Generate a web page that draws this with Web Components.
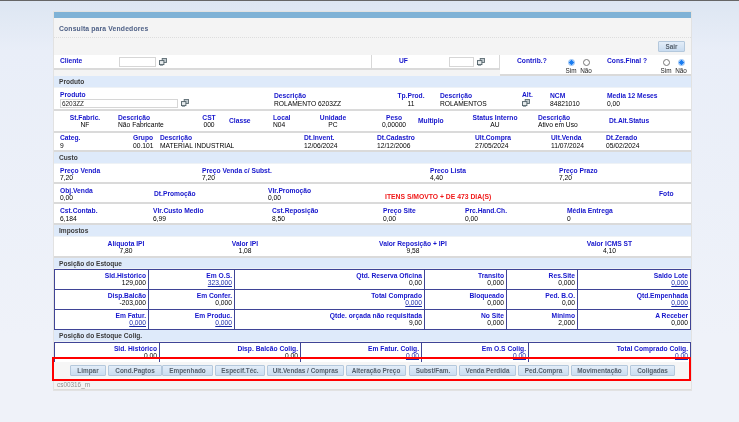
<!DOCTYPE html>
<html>
<head>
<meta charset="utf-8">
<title>Consulta para Vendedores</title>
<style>
html, body { margin: 0; height: 100%; }
body { background: #eef2fa; overflow: hidden; font-family: "Liberation Sans", Arial, sans-serif; }
</style>
</head>
<body>
<vendor-page></vendor-page>

<script>
const lookupIcon = `<svg width="8" height="8" viewBox="0 0 8 8"><rect x="3.2" y=".5" width="4.3" height="4" fill="#c3ccd0" stroke="#5d6c73" stroke-width=".9"/><rect x=".5" y="2.6" width="4.4" height="4" fill="#e6ebed" stroke="#4f5f66" stroke-width=".9"/><path d="M1 7.6h3" stroke="#7b8a90" stroke-width=".8"/></svg>`;

// bloco label + valor
class InfoField extends HTMLElement {
    constructor() {
        super();
        this.attachShadow({ mode: 'open' });
        const align = this.getAttribute('align') || 'left';
        this.shadowRoot.innerHTML = `
            <style>
                :host { display: block; text-align: ${align}; font-size: 6.7px; line-height: 7.4px; white-space: nowrap; }
                .l { color: #1414cc; font-weight: bold; }
                .v { color: #000; }
                .v.link { color: #1a2aa8; text-decoration: underline; }
            </style>
            <div class="l">${this.getAttribute('label') || ''}</div>
            <div class="v ${this.hasAttribute('link') ? 'link' : ''}">${this.getAttribute('value') || ''}<slot></slot></div>
        `;
    }
}
customElements.define('info-field', InfoField);

// linha com colunas definidas por grid
class InfoRow extends HTMLElement {
    constructor() {
        super();
        this.attachShadow({ mode: 'open' });
        this.shadowRoot.innerHTML = `
            <style>
                :host {
                    display: grid;
                    grid-template-columns: ${this.getAttribute('cols')};
                    height: ${this.getAttribute('h') || 20}px;
                    align-items: center;
                    background: #fff;
                    border-bottom: 2px solid #dadada;
                    box-sizing: border-box;
                    padding: ${this.getAttribute('pt') || 0}px 0 0 6px;
                }
            </style>
            <slot></slot>
        `;
    }
}
customElements.define('info-row', InfoRow);

class SectionHead extends HTMLElement {
    constructor() {
        super();
        this.attachShadow({ mode: 'open' });
        const h = Number(this.getAttribute('h') || 11);
        this.shadowRoot.innerHTML = `
            <style>
                :host {
                    display: block;
                    height: ${h}px;
                    line-height: ${h + 1}px;
                    padding-left: 5px;
                    background: #deeafa;
                    border-bottom: 1px solid #eef2f6;
                    color: #3c3c3c;
                    font-size: 6.6px;
                    font-weight: bold;
                }
            </style>
            <slot></slot>
        `;
    }
}
customElements.define('section-head', SectionHead);

// tabela de estoque com bordas azuis
class StockGrid extends HTMLElement {
    constructor() {
        super();
        this.attachShadow({ mode: 'open' });
        this.shadowRoot.innerHTML = `
            <style>
                :host {
                    display: grid;
                    grid-template-columns: ${this.getAttribute('cols')};
                    grid-auto-rows: ${this.getAttribute('rows') || '20px'};
                    background: #fff;
                    border: 1px solid #3f4496;
                    border-width: 1px 0 0 1px;
                    box-sizing: border-box;
                    height: ${this.getAttribute('h') || 'auto'};
                    overflow: hidden;
                }
                ::slotted(info-field) {
                    box-sizing: border-box;
                    border-right: 1px solid #3f4496;
                    border-bottom: 1px solid #3f4496;
                    padding: 2px 2px 0 0;
                }
            </style>
            <slot></slot>
        `;
    }
}
customElements.define('stock-grid', StockGrid);

class ActionButton extends HTMLElement {
    constructor() {
        super();
        this.attachShadow({ mode: 'open' });
        this.shadowRoot.innerHTML = `
            <style>
                :host {
                    display: block;
                    box-sizing: border-box;
                    width: ${this.getAttribute('w')}px;
                    height: 11px;
                    line-height: 9px;
                    text-align: center;
                    background: linear-gradient(#e3edf8, #c9dcf0);
                    border: 1px solid #b4c8dc;
                    border-radius: 1px;
                    color: #55606c;
                    font-size: 6.4px;
                    font-weight: bold;
                    white-space: nowrap;
                }
            </style>
            <slot></slot>
        `;
    }
}
customElements.define('action-button', ActionButton);

class RadioDot extends HTMLElement {
    constructor() {
        super();
        this.attachShadow({ mode: 'open' });
        const on = this.hasAttribute('on');
        this.shadowRoot.innerHTML = `
            <style>
                :host { display: flex; flex-direction: column; align-items: center; width: 15px; font-size: 6.4px; line-height: 6px; color: #222; gap: 2px; font-weight: normal; margin-top: 4px; }
                i { display: block; width: 5px; height: 5px; border-radius: 50%; border: 1px solid ${on ? '#8cbcf5' : '#777'}; background: ${on ? 'radial-gradient(#1a7cf0 60%, #cfe3fb 65%)' : '#fff'}; }
            </style>
            <i></i><span><slot></slot></span>
        `;
    }
}
customElements.define('radio-dot', RadioDot);

class VendorPage extends HTMLElement {
    constructor() {
        super();
        this.attachShadow({ mode: 'open' });
        this.shadowRoot.innerHTML = `
            <style>
                :host { display: block; position: relative; width: 739px; height: 422px; box-sizing: border-box; padding: 11px 0 0 54px; background: linear-gradient(#dde6f2, #e9eef8 12%, #eff2f9 80%); border-top: 1px solid #666; filter: blur(.3px); }
                .panel { width: 637px; background: #f4f4f4; box-shadow: 0 0 0 1px #e2e2e2; }
                .bar { height: 6px; background: #7fb2d6; }
                .title { height: 19px; line-height: 22px; padding-left: 5px; color: #4e6086; font-size: 6.8px; font-weight: bold; border-bottom: 1px dotted #ddd; letter-spacing: .15px; }
                .tools { height: 17px; display: flex; justify-content: flex-end; align-items: flex-start; padding: 3px 6px 0 0; box-sizing: border-box; }
                .client { display: grid; grid-template-columns: 318px 128px 1fr; height: 21px; align-items: start; }
                .c1, .c2 { box-sizing: border-box; height: 15px; background: #fff; border-bottom: 2px solid #dadada; border-right: 1px solid #d8d8d8; display: flex; align-items: center; font-size: 6.7px; font-weight: bold; color: #1414cc; }
                .c1 b { margin-left: 6px; width: 58.5px; align-self: flex-start; margin-top: 2px; line-height: 8px; }
                .c2 b { margin-left: 27px; width: 50px; align-self: flex-start; margin-top: 2px; line-height: 8px; }
                .box { box-sizing: border-box; width: 37px; height: 10px; background: #fff; border: 1px solid #d6d6d6; margin: 1px 3px 0 0; }
                .c2 .box { width: 25px; }
                .c3 { box-sizing: border-box; height: 21px; background: #fff; border-bottom: 2px solid #dadada; display: flex; font-size: 6.7px; font-weight: bold; color: #1414cc; }
                .c3 b { margin-top: 2px; line-height: 8px; }
                .prod-in { display: flex; align-items: center; margin-top: 0; }
                .prod-in span { box-sizing: border-box; display: block; width: 118px; height: 9px; line-height: 7px; background: #fff; border: 1px solid #d6d6d6; margin-right: 3px; padding-left: 1px; color: #222; font-size: 6.4px; }
                .actions { display: flex; gap: 2px; height: 18px; align-items: flex-start; padding: 3px 0 0 16px; box-sizing: border-box; background: #f6f6f6; }
                .foot { height: 10px; line-height: 10px; padding-left: 3px; font-size: 6.4px; color: #8f8f8f; box-sizing: border-box; border-bottom: 1px solid #ddd; }
                .mark { position: absolute; left: 52px; top: 356px; width: 635px; height: 20px; border: 2px solid #f00; pointer-events: none; }
                .red { color: #f01818; font-size: 6.8px; font-weight: bold; white-space: nowrap; align-self: end; padding-bottom: 1px; line-height: 8px; }
            </style>
            <div class="panel">
                <div class="bar"></div>
                <div class="title">Consulta para Vendedores</div>
                <div class="tools"><action-button w="27">Sair</action-button></div>
                <div class="client">
                    <div class="c1"><b>Cliente</b><span class="box"></span>${lookupIcon}</div>
                    <div class="c2"><b>UF</b><span class="box"></span>${lookupIcon}</div>
                    <div class="c3">
                        <b style="margin-left:17px;width:46.5px">Contrib.?</b>
                        <radio-dot on>Sim</radio-dot><radio-dot>Não</radio-dot>
                        <b style="margin-left:13.5px;width:51.5px">Cons.Final ?</b>
                        <radio-dot>Sim</radio-dot><radio-dot on>Não</radio-dot>
                    </div>
                </div>

                <section-head>Produto</section-head>
                <info-row h="23" pt="2" cols="214px 118px 38px 92px 28px 57px 1fr">
                    <info-field label="Produto"><div class="prod-in"><span>6203ZZ</span>${lookupIcon}</div></info-field>
                    <info-field label="Descrição" value="ROLAMENTO 6203ZZ"></info-field>
                    <info-field label="Tp.Prod." value="11" align="center"></info-field>
                    <info-field label="Descrição" value="ROLAMENTOS" style="padding-left:10px"></info-field>
                    <info-field label="Alt.">${lookupIcon}</info-field>
                    <info-field label="NCM" value="84821010"></info-field>
                    <info-field label="Media 12 Meses" value="0,00"></info-field>
                </info-row>
                <info-row h="22" cols="50px 84px 30px 49px 40px 40px 62px 40px 80px 74px 1fr">
                    <info-field label="St.Fabric." value="NF" align="center"></info-field>
                    <info-field label="Descrição" value="Não Fabricante" style="padding-left:8px"></info-field>
                    <info-field label="CST" value="000" align="center"></info-field>
                    <info-field label="Classe" style="padding-left:5px"></info-field>
                    <info-field label="Local" value="N04"></info-field>
                    <info-field label="Unidade" value="PC" align="center"></info-field>
                    <info-field label="Peso" value="0,00000" align="center" style="margin-left:20px"></info-field>
                    <info-field label="Multiplo" style="padding-left:3px"></info-field>
                    <info-field label="Status Interno" value="AU" align="center"></info-field>
                    <info-field label="Descrição" value="Ativo em Uso" style="padding-left:3px"></info-field>
                    <info-field label="Dt.Alt.Status"></info-field>
                </info-row>
                <info-row h="19" cols="73px 27px 144px 73px 98px 76px 55px 1fr">
                    <info-field label="Categ." value="9"></info-field>
                    <info-field label="Grupo" value="00.101"></info-field>
                    <info-field label="Descrição" value="MATERIAL INDUSTRIAL"></info-field>
                    <info-field label="Dt.Invent." value="12/06/2024"></info-field>
                    <info-field label="Dt.Cadastro" value="12/12/2006"></info-field>
                    <info-field label="Ult.Compra" value="27/05/2024"></info-field>
                    <info-field label="Ult.Venda" value="11/07/2024"></info-field>
                    <info-field label="Dt.Zerado" value="05/02/2024"></info-field>
                </info-row>

                <section-head>Custo</section-head>
                <info-row h="20" pt="2" cols="142px 228px 129px 1fr">
                    <info-field label="Preço Venda" value="7,20"></info-field>
                    <info-field label="Preço Venda c/ Subst." value="7,20"></info-field>
                    <info-field label="Preco Lista" value="4,40"></info-field>
                    <info-field label="Preço Prazo" value="7,20"></info-field>
                </info-row>
                <info-row h="20" pt="2" cols="94px 114px 117px 274px 1fr">
                    <info-field label="Obj.Venda" value="0,00"></info-field>
                    <info-field label="Dt.Promoção"></info-field>
                    <info-field label="Vlr.Promoção" value="0,00"></info-field>
                    <div class="red">ITENS S/MOVTO + DE 473 DIA(S)</div>
                    <info-field label="Foto"></info-field>
                </info-row>
                <info-row h="21" pt="2" cols="93px 119px 111px 82px 102px 1fr">
                    <info-field label="Cst.Contab." value="6,184"></info-field>
                    <info-field label="Vlr.Custo Medio" value="6,99"></info-field>
                    <info-field label="Cst.Reposição" value="8,50"></info-field>
                    <info-field label="Preço Site" value="0,00"></info-field>
                    <info-field label="Prc.Hand.Ch." value="0,00"></info-field>
                    <info-field label="Média Entrega" value="0"></info-field>
                </info-row>

                <section-head>Impostos</section-head>
                <info-row h="21" pt="1" cols="132px 106px 230px 1fr">
                    <info-field label="Alíquota IPI" value="7,80" align="center"></info-field>
                    <info-field label="Valor IPI" value="1,08" align="center"></info-field>
                    <info-field label="Valor Reposição + IPI" value="9,58" align="center"></info-field>
                    <info-field label="Valor ICMS ST" value="4,10" align="center"></info-field>
                </info-row>

                <section-head h="10">Posição do Estoque</section-head>
                <stock-grid cols="94px 86px 190px 82px 71px 113px">
                    <info-field align="right" label="Sld.Histórico" value="129,000"></info-field>
                    <info-field align="right" label="Em O.S." value="323,000" link></info-field>
                    <info-field align="right" label="Qtd. Reserva Oficina" value="0,00"></info-field>
                    <info-field align="right" label="Transito" value="0,000"></info-field>
                    <info-field align="right" label="Res.Site" value="0,000"></info-field>
                    <info-field align="right" label="Saldo Lote" value="0,000" link></info-field>
                    <info-field align="right" label="Disp.Balcão" value="-203,000"></info-field>
                    <info-field align="right" label="Em Confer." value="0,000"></info-field>
                    <info-field align="right" label="Total Comprado" value="0,000" link></info-field>
                    <info-field align="right" label="Bloqueado" value="0,000"></info-field>
                    <info-field align="right" label="Ped. B.O." value="0,00"></info-field>
                    <info-field align="right" label="Qtd.Empenhada" value="0,000" link></info-field>
                    <info-field align="right" label="Em Fatur." value="0,000" link></info-field>
                    <info-field align="right" label="Em Produc." value="0,000" link></info-field>
                    <info-field align="right" label="Qtde. orçada não requisitada" value="9,00"></info-field>
                    <info-field align="right" label="No Site" value="0,000"></info-field>
                    <info-field align="right" label="Mínimo" value="2,000"></info-field>
                    <info-field align="right" label="A Receber" value="0,000"></info-field>
                </stock-grid>

                <section-head>Posição do Estoque Colig.</section-head>
                <stock-grid cols="105px 141px 121px 107px 162px" rows="24px" h="20px">
                    <info-field align="right" label="Sld. Histórico" value="0,00"></info-field>
                    <info-field align="right" label="Disp. Balcão Colig." value="0,00"></info-field>
                    <info-field align="right" label="Em Fatur. Colig." value="0,00" link></info-field>
                    <info-field align="right" label="Em O.S Colig." value="0,00" link></info-field>
                    <info-field align="right" label="Total Comprado Colig." value="0,00" link></info-field>
                </stock-grid>

                <div class="actions">
                    <action-button w="36">Limpar</action-button>
                    <action-button w="54">Cond.Pagtos</action-button>
                    <action-button w="51" style="margin-left:-2px">Empenhado</action-button>
                    <action-button w="50">Especif.Téc.</action-button>
                    <action-button w="77">Ult.Vendas / Compras</action-button>
                    <action-button w="60">Alteração Preço</action-button>
                    <action-button w="48" style="margin-left:1px">Subst/Fam.</action-button>
                    <action-button w="57">Venda Perdida</action-button>
                    <action-button w="51">Ped.Compra</action-button>
                    <action-button w="57">Movimentação</action-button>
                    <action-button w="45">Coligadas</action-button>
                </div>
                <div class="foot">cs00316_m</div>
            </div>
            <div class="mark"></div>
        `;
    }
}
customElements.define('vendor-page', VendorPage);
</script>
</body>
</html>
